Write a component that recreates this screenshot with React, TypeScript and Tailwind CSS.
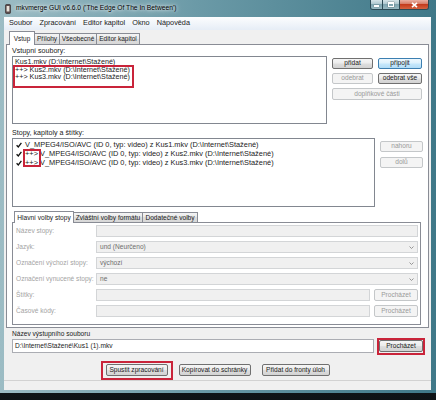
import type { ReactNode } from "react"

type Kind = "normal" | "focus" | "disabled"

const kinds: Record<Kind, string> = {
  normal:
    "border-[#707070] bg-[linear-gradient(#f5f5f5,#ececec_48%,#dedede_52%,#d2d2d2)] text-[#1a1a1a]",
  focus:
    "border-[#3c7fb1] bg-[linear-gradient(#eef8fe,#dcf1fc_48%,#c6e8fc_52%,#b2ddf6)] text-[#1a1a1a]",
  disabled: "border-[#c4c7c9] bg-[#f4f4f4] text-[#9a9a9a]",
}

function Btn({
  kind = "normal",
  className,
  children,
}: {
  kind?: Kind
  className: string
  children: ReactNode
}) {
  return (
    <div
      className={`flex shrink-0 items-center justify-center rounded-[2px] border text-[6.6px] leading-none whitespace-nowrap ${kinds[kind]} ${className}`}
    >
      {children}
    </div>
  )
}

// red annotation frame drawn over the screenshot
function Mark({ className }: { className: string }) {
  return (
    <span
      className={`pointer-events-none absolute z-20 border-2 border-[#c9243a] ${className}`}
    />
  )
}

function Check() {
  return (
    <svg width="6" height="6" viewBox="0 0 6 6" className="shrink-0">
      <path
        d="M0.6 3.2 L2.3 4.9 L5.4 0.9"
        fill="none"
        stroke="#111"
        strokeWidth="1.3"
      />
    </svg>
  )
}

function Arrow() {
  return (
    <svg width="5" height="3" viewBox="0 0 5 3" className="shrink-0">
      <path
        d="M0.5 0.5 L2.5 2.5 L4.5 0.5"
        fill="none"
        stroke="#8a8a8a"
        strokeWidth="0.9"
      />
    </svg>
  )
}

function Field({
  label,
  value = "",
  select = false,
  browse = false,
}: {
  label: string
  value?: string
  select?: boolean
  browse?: boolean
}) {
  return (
    <div className="flex h-[12px] items-center">
      <span className="w-[80px] shrink-0 whitespace-nowrap text-[#a3a3a3]">{label}</span>
      <div className="flex h-full flex-1 items-center justify-between border border-[#d3d5d7] bg-[#f0f0f0] pr-[3px] pl-[3px] text-[#6d6d6d]">
        <span>{value}</span>
        {select && <Arrow />}
      </div>
      {browse && (
        <Btn kind="disabled" className="ml-[4px] h-[12px] w-[44px]">
          Procházet
        </Btn>
      )}
    </div>
  )
}

const files = [
  "Kus1.mkv (D:\\Internet\\Stažené)",
  "++> Kus2.mkv (D:\\Internet\\Stažené)",
  "++> Kus3.mkv (D:\\Internet\\Stažené)",
]

const tracks = [
  ["", "V_MPEG4/ISO/AVC (ID 0, typ: video) z Kus1.mkv (D:\\Internet\\Stažené)"],
  ["++> ", "V_MPEG4/ISO/AVC (ID 0, typ: video) z Kus2.mkv (D:\\Internet\\Stažené)"],
  ["++> ", "V_MPEG4/ISO/AVC (ID 0, typ: video) z Kus3.mkv (D:\\Internet\\Stažené)"],
]

const menu = ["Soubor", "Zpracování", "Editor kapitol", "Okno", "Nápověda"]

export default function App() {
  return (
    <div className="h-[400px] w-[436px] overflow-hidden bg-[linear-gradient(#2f3b42,#0e1316)] font-['Liberation_Sans',Arial,sans-serif] text-[6.6px] text-[#1a1a1a]">
      {/* window frame */}
      <div className="flex h-[393px] flex-col bg-[linear-gradient(90deg,#9cbcc4,#6b9aa7_45%,#3f7888)]">
        {/* title bar */}
        <div className="flex h-[17px] shrink-0 items-start">
          <div className="flex h-full flex-1 items-center pl-[5px]">
            <svg width="6" height="10" viewBox="0 0 6 10" className="shrink-0">
              <rect x="0.5" y="0.5" width="5" height="9" rx="1" fill="#5b4a4a" stroke="#2d2424" strokeWidth="0.6" />
              <rect x="1.6" y="2" width="2.8" height="5.5" fill="#e8e2da" />
            </svg>
            <span className="ml-[5px] text-[6.7px] whitespace-nowrap text-black [text-shadow:0_0_3px_#fff,0_0_6px_#fff]">
              mkvmerge GUI v6.6.0 ('The Edge Of The In Between')
            </span>
          </div>
          <div className="mr-[7px] flex h-[10px] overflow-hidden rounded-b-[3px] border border-t-0 border-[#2c4a55]">
            <div className="flex w-[12px] items-end justify-center border-r border-[#2c4a55] bg-[linear-gradient(#d5e4e8,#a9c4cc_50%,#7fa5b0_50%,#97b8c1)] pb-[2px]">
              <span className="h-[2px] w-[5px] bg-white shadow-[0_0_1px_#333]" />
            </div>
            <div className="flex w-[17px] items-center justify-center border-r border-[#2c4a55] bg-[linear-gradient(#d5e4e8,#a9c4cc_50%,#7fa5b0_50%,#97b8c1)]">
              <span className="h-[5px] w-[6px] border border-t-2 border-white shadow-[0_0_1px_#333]" />
            </div>
            <div className="flex w-[28px] items-center justify-center bg-[linear-gradient(#eab0a3,#d67a64_45%,#c43b1d_50%,#d4623f)]">
              <svg width="7" height="6" viewBox="0 0 7 6">
                <path d="M1 0.8 L6 5.2 M6 0.8 L1 5.2" stroke="#fff" strokeWidth="1.6" />
              </svg>
            </div>
          </div>
        </div>

        {/* client */}
        <div className="flex flex-1 pr-[6px] pb-[3px] pl-[4px]">
          <div className="flex flex-1 flex-col bg-[#f0f0f0]">
            {/* menu bar */}
            <div className="flex h-[13px] shrink-0 items-center gap-[7px] bg-[linear-gradient(#fcfdfe,#e6edf6)] pl-[5px] text-[7.3px]">
              {menu.map((m) => (
                <span key={m}>{m}</span>
              ))}
            </div>

            {/* main notebook */}
            <div className="mx-[2px] mt-[1px] flex flex-col">
              <div className="flex h-[13px] items-end pl-[3px] text-[6.5px]">
                <div className="relative z-10 -mb-[1px] flex h-[14px] w-[26px] items-center justify-center border border-b-0 border-[#898c95] bg-white">
                  Vstup
                </div>
                <div className="flex h-[11px] w-[25px] items-center justify-center border border-b-0 border-l-0 border-[#898c95] bg-[linear-gradient(#f4f4f4,#e8e8e8_50%,#dcdcdc_50%,#d8d8d8)]">
                  Přílohy
                </div>
                <div className="flex h-[11px] w-[37px] items-center justify-center border border-b-0 border-l-0 border-[#898c95] bg-[linear-gradient(#f4f4f4,#e8e8e8_50%,#dcdcdc_50%,#d8d8d8)]">
                  Všeobecné
                </div>
                <div className="flex h-[11px] w-[43px] items-center justify-center border border-b-0 border-l-0 border-[#898c95] bg-[linear-gradient(#f4f4f4,#e8e8e8_50%,#dcdcdc_50%,#d8d8d8)]">
                  Editor kapitol
                </div>
              </div>

              <div className="flex h-[284px] flex-col border border-[#898c95] bg-white pr-[5px] pl-[5px]">
                <div className="mt-[1px] h-[10px] text-[7.1px] leading-[10px]">Vstupní soubory:</div>
                <div className="flex gap-[5px]">
                  <div className="relative h-[68px] w-[315px] border border-[#828790] bg-white pt-[1px] pl-[1px] text-[7.2px]">
                    {files.map((f) => (
                      <div key={f} className="h-[7.6px] pl-[1px] leading-[7.6px] whitespace-nowrap">
                        {f}
                      </div>
                    ))}
                    <Mark className="top-[8px] left-0 h-[23px] w-[121px]" />
                  </div>
                  <div className="mt-[2px] flex flex-col gap-[4px]">
                    <div className="flex gap-[5px]">
                      <Btn className="h-[11px] w-[41px]">přidat</Btn>
                      <Btn kind="focus" className="h-[11px] w-[44px]">
                        připojit
                      </Btn>
                    </div>
                    <div className="flex gap-[5px]">
                      <Btn kind="disabled" className="h-[11px] w-[41px]">
                        odebrat
                      </Btn>
                      <Btn className="h-[11px] w-[44px]">odebrat vše</Btn>
                    </div>
                    <Btn kind="disabled" className="h-[12px] w-[90px]">
                      doplňkové části
                    </Btn>
                  </div>
                </div>

                <div className="mt-[5px] h-[9px] text-[7.1px] leading-[9px]">Stopy, kapitoly a štítky:</div>
                <div className="flex gap-[5px]">
                  <div className="relative h-[69px] w-[363px] border border-[#828790] bg-white pt-[1px] pl-[3px] text-[7.4px]">
                    {tracks.map(([pre, t]) => (
                      <div key={t} className="flex h-[9px] items-center gap-[3px] whitespace-nowrap">
                        <Check />
                        <span>
                          {pre}
                          {t}
                        </span>
                      </div>
                    ))}
                    <Mark className="top-[10px] left-[10px] h-[18px] w-[18px]" />
                  </div>
                  <div className="mt-[3px] flex flex-col gap-[5px]">
                    <Btn kind="disabled" className="h-[11px] w-[43px]">
                      nahoru
                    </Btn>
                    <Btn kind="disabled" className="h-[11px] w-[43px]">
                      dolů
                    </Btn>
                  </div>
                </div>

                {/* track options notebook */}
                <div className="mt-[4px] flex w-[409px] flex-col">
                  <div className="flex h-[11px] items-end pl-[2px] text-[6.6px]">
                    <div className="relative z-10 -mb-[1px] flex h-[12px] w-[60px] items-center justify-center border border-b-0 border-[#898c95] bg-white">
                      Hlavní volby stopy
                    </div>
                    <div className="flex h-[10px] w-[69px] items-center justify-center border border-b-0 border-l-0 border-[#898c95] bg-[linear-gradient(#f4f4f4,#e8e8e8_50%,#dcdcdc_50%,#d8d8d8)]">
                      Zvláštní volby formátu
                    </div>
                    <div className="flex h-[10px] w-[55px] items-center justify-center border border-b-0 border-l-0 border-[#898c95] bg-[linear-gradient(#f4f4f4,#e8e8e8_50%,#dcdcdc_50%,#d8d8d8)]">
                      Dodatečné volby
                    </div>
                  </div>
                  <div className="flex h-[103px] flex-col gap-[4px] border border-[#898c95] bg-white pt-[2px] pr-[2px] pl-[3px]">
                    <Field label="Název stopy:" />
                    <Field label="Jazyk:" value="und (Neurčeno)" select />
                    <Field label="Označení výchozí stopy:" value="výchozí" select />
                    <Field label="Označení vynucené stopy:" value="ne" select />
                    <Field label="Štítky:" browse />
                    <Field label="Časové kódy:" browse />
                  </div>
                </div>
              </div>
            </div>

            {/* output file */}
            <div className="mt-[2px] h-[8px] pl-[8px] leading-[8px]">Název výstupního souboru</div>
            <div className="mt-[1px] flex h-[14px] items-center pl-[8px]">
              <div className="flex h-full w-[362px] items-center border border-[#abadb3] bg-white pl-[2px]">
                D:\Internet\Stažené\Kus1 (1).mkv
              </div>
              <div className="relative ml-[5px]">
                <Btn className="h-[12px] w-[44px]">Procházet</Btn>
                <Mark className="-top-[2px] -left-[2px] h-[17px] w-[48px]" />
              </div>
            </div>

            {/* actions */}
            <div className="mt-[11px] flex h-[12px] justify-center gap-[11px]">
              <div className="relative">
                <Btn className="h-[12px] w-[62px]">Spustit zpracování</Btn>
                <Mark className="-top-[3px] -left-[5px] h-[19px] w-[72px]" />
              </div>
              <Btn className="h-[12px] w-[72px]">Kopírovat do schránky</Btn>
              <Btn className="h-[12px] w-[68px]">Přidat do fronty úloh</Btn>
            </div>

            {/* status bar */}
            <div className="mt-[4px] flex-1 border-t border-[#d2d2d2] bg-[#f0f0f0]" />
          </div>
        </div>
      </div>
    </div>
  )
}
